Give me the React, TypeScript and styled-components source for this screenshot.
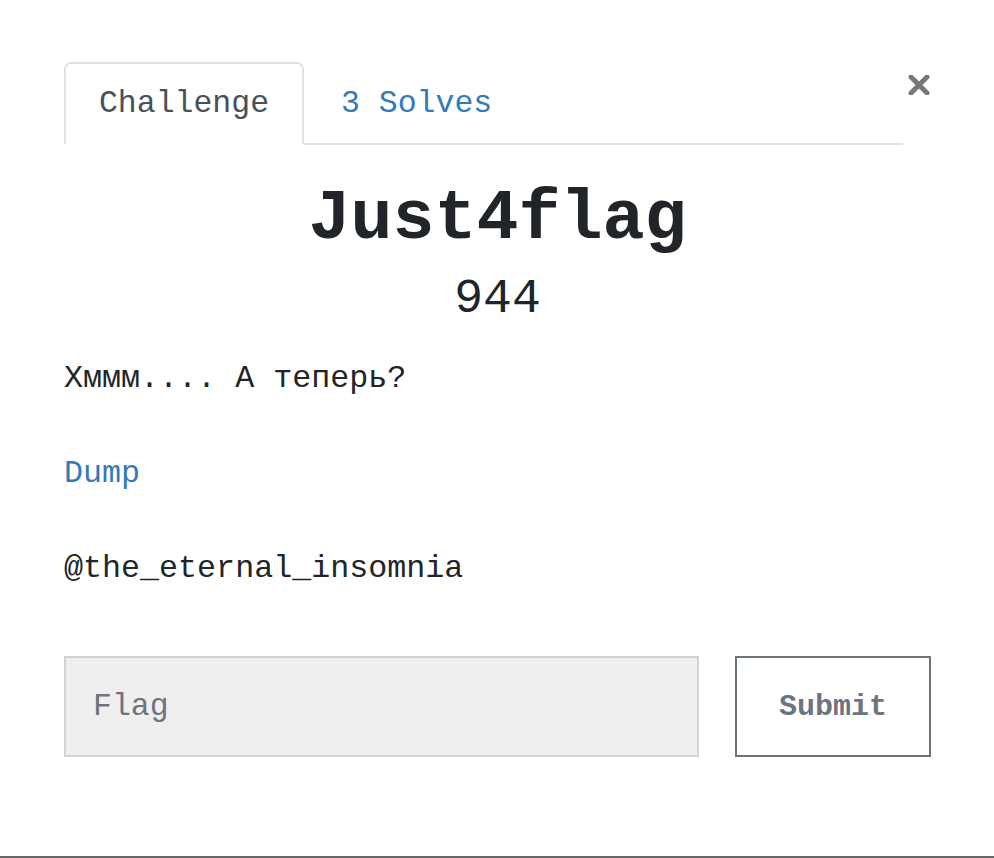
import React from "react";
import styled, { createGlobalStyle } from "styled-components";

const Global = createGlobalStyle`
  html, body { margin: 0; padding: 0; background: #fff; }
  body { font-family: "Liberation Mono", "Courier New", monospace; color: #212529; }
  * { box-sizing: border-box; }
`;

const Page = styled.div`
  height: 858px;
  border-bottom: 2px solid #666;
  padding: 62px 63px 0 64px;
`;

const Header = styled.div`
  display: flex;
  align-items: flex-start;
`;

const TabList = styled.div`
  display: flex;
  width: 839px;
  border-bottom: 2px solid #dee2e6;
`;

const Tab = styled.div<{ $active?: boolean }>`
  width: ${(p) => (p.$active ? "240px" : "auto")};
  height: 83px;
  margin-bottom: -2px;
  display: flex;
  align-items: center;
  justify-content: center;
  padding: 0 ${(p) => (p.$active ? "0" : "35px")};
  font-size: 31.5px;
  color: ${(p) => (p.$active ? "#495057" : "#337ab7")};
  border: 2px solid ${(p) => (p.$active ? "#dee2e6" : "transparent")};
  border-bottom-color: ${(p) => (p.$active ? "#fff" : "transparent")};
  border-radius: 7px 7px 0 0;
  background: ${(p) => (p.$active ? "#fff" : "transparent")};
`;

const Close = styled.button`
  margin-left: auto;
  margin-top: 11px;
  border: none;
  background: none;
  padding: 0;
  width: 24px;
  height: 24px;
  display: flex;
  align-items: center;
  justify-content: center;
  cursor: pointer;
`;

const Title = styled.h1`
  margin: 33px 0 0;
  text-align: center;
  font-size: 70px;
  font-weight: 700;
  line-height: 84px;
`;

const Value = styled.h2`
  margin: 8px 0 0;
  text-align: center;
  font-size: 48px;
  font-weight: 400;
  line-height: 58px;
`;

const Desc = styled.div`
  margin-top: 27px;
`;

const Para = styled.p`
  margin: 0 0 47px;
  font-size: 31.7px;
  line-height: 48px;
`;

const Link = styled.a`
  color: #337ab7;
  text-decoration: none;
`;

const Form = styled.div`
  display: flex;
  gap: 36px;
  margin-top: 63px;
`;

const Input = styled.input`
  width: 635px;
  height: 101px;
  background: #efefef;
  border: 2px solid #ced4da;
  padding: 0 27px;
  font-family: "Liberation Mono", "Courier New", monospace;
  font-size: 31.5px;
  color: #495057;
  outline: none;
  &::placeholder { color: #6c757d; }
`;

const Submit = styled.button`
  width: 196px;
  height: 101px;
  background: #fff;
  border: 2px solid #6c757d;
  font-family: "Liberation Mono", "Courier New", monospace;
  font-weight: 700;
  font-size: 30px;
  color: #6c757d;
  padding: 0;
`;

export default function App() {
  return (
    <>
      <Global />
      <Page>
        <Header>
          <TabList>
            <Tab $active>Challenge</Tab>
            <Tab>3 Solves</Tab>
          </TabList>
          <Close aria-label="Close">
            <svg width="22" height="20" viewBox="0 0 22 20">
              <path d="M3 2 L19 18 M19 2 L3 18" stroke="#777" strokeWidth="5" strokeLinecap="round" />
            </svg>
          </Close>
        </Header>
        <Title>Just4flag</Title>
        <Value>944</Value>
        <Desc>
          <Para>Хммм.... А теперь?</Para>
          <Para>
            <Link href="#">Dump</Link>
          </Para>
          <Para>@the_eternal_insomnia</Para>
        </Desc>
        <Form>
          <Input placeholder="Flag" />
          <Submit>Submit</Submit>
        </Form>
      </Page>
    </>
  );
}
